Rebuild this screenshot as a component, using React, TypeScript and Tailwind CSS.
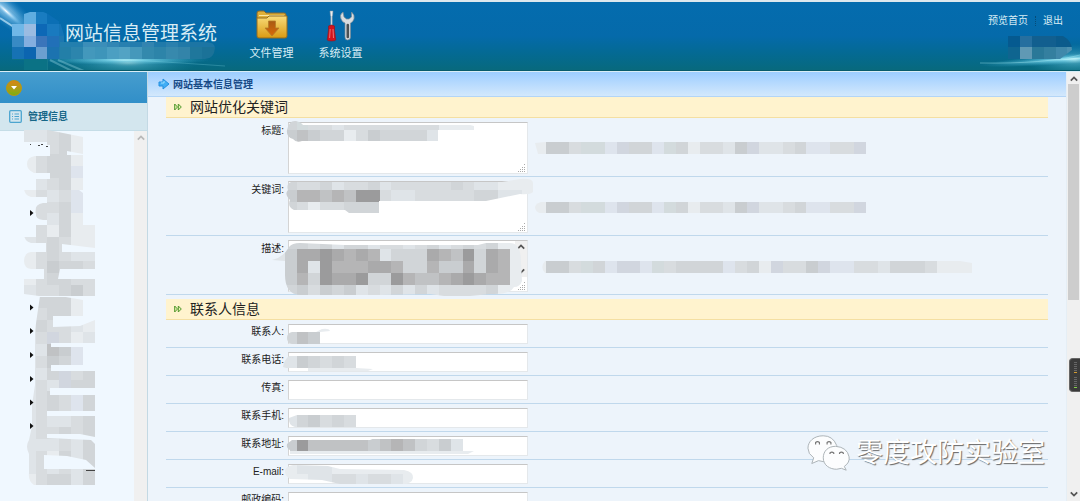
import type { ReactNode } from "react";

const CELL = 11.86;

const TONES: Record<string, string> = {
  a: "#e8ecef",
  b: "#dfe4e8",
  c: "#d8dcdf",
  d: "#d1d5d8",
  e: "#c9cdd0",
  f: "#c0c2c4",
  g: "#b5b5b6",
  h: "#aaaaab",
  i: "#9b9b9c",
  k: "#dee4ed",
  l: "#d1d6df",
  w: "#d3dbdd",
};

type MosaicData = { id: string; col: number; row: number; rows: (string | string[])[]; clip: string };

function Mosaic({ id, col, row, rows, clip }: MosaicData) {
  return (
    <g>
      <clipPath id={id}>
        <path d={clip} />
      </clipPath>
      <g clipPath={`url(#${id})`} shapeRendering="crispEdges">
        {rows.map((line, r) =>
          Array.from(line).map((tone, c) =>
            tone === "." ? null : (
              <rect
                key={`${r}-${c}`}
                x={(col + c) * CELL}
                y={(row + r) * CELL}
                width={CELL}
                height={CELL}
                fill={TONES[tone] ?? tone}
              />
            ),
          ),
        )}
      </g>
    </g>
  );
}

function Overlay({ x, y, children }: { x: number; y: number; children: ReactNode }) {
  return (
    <svg className="pointer-events-none absolute inset-0 h-full w-full overflow-visible" aria-hidden="true">
      <g transform={`translate(${-x} ${-y})`}>{children}</g>
    </svg>
  );
}

const HINT = "eecwwklddkwdaccbelbbcdkkccl";

const TEXT_ROWS: { id: string; label: string; masks: MosaicData[]; scroll?: boolean }[] = [
  {
    id: "title",
    label: "标题:",
    masks: [
      { id: "t1", col: 24, row: 10, rows: ["dwccbccccccccaaa", "efeddaceddddb..."], clip: "M287 130Q289 120 296 121Q301 122 303 125H470Q477 126 477 130H438V141H302Q296 143 293 139Q286 137 287 130Z" },
      { id: "t2", col: 45, row: 12, rows: ["a" + HINT], clip: "M535 143L545 142H866V154H538Z" },
    ],
  },
  {
    id: "keywords",
    label: "关键词:",
    masks: [
      { id: "k1", col: 24, row: 15, rows: ["dccdbccdbcccccdcbbaaa", "eggfgfiicbbcccccddbba", "dcaccddd"], clip: "M288 190Q286 184 291 182H502L520 179Q534 178 533 184V192Q530 195 520 194L486 201H379V213H349L345 210H294Q287 207 290 200Q284 194 288 190Z" },
      { id: "k2", col: 45, row: 17, rows: ["a" + HINT], clip: "M545 201.5H866V213.5H541Q535 212 535 207Q536 202 545 201.5Z" },
    ],
  },
  {
    id: "description",
    label: "描述:",
    scroll: true,
    masks: [
      { id: "d1", col: 22, row: 20, rows: ["..ddcdbddbccbcdbcdcdaa", "bbehhihghgbdddhgfidhga", "bbehbiggghhgddgeehdhga", "bbegdihhiddigffghihgga", "bbdecedebcbdbdbccccdaa"], clip: "M289 247Q292 243 300 243L345 245H478L486 243H510Q521 243 521 262L522 281Q520 287 514 287Q510 295 490 294L470 296H444L430 294L380 295L300 295Q285 294 285 275V261L272 260Q284 257 289 247Z" },
      { id: "d2", col: 45, row: 22, rows: ["aeecwdkllkwcddddkcdalccelkkccbdddcaaa"], clip: "M545 261H960L972 263V273H545Q541 269 543 264Z" },
    ],
  },
];

const INPUT_ROWS: { id: string; label: string; masks: MosaicData[] }[] = [
  { id: "contact", label: "联系人:", masks: [{ id: "i1", col: 24, row: 27, rows: ["aaaaaa", "dfeb"], clip: "M292 332H316L322 329Q329 328 330 331L320 332V344H292Q287 343 287 338Q287 333 292 332Z" }] },
  { id: "phone", label: "联系电话:", masks: [{ id: "i2", col: 23, row: 30, rows: ["bbedcdc", "...aaaaaa"], clip: "M289 356H356V368L373 369L368 371H296L283 367Q284 360 289 356Z" }] },
  { id: "fax", label: "传真:", masks: [] },
  { id: "mobile", label: "联系手机:", masks: [{ id: "i3", col: 24, row: 35, rows: ["bdecdc"], clip: "M297 415H356V427H295Q288 425 289 418Z" }] },
  { id: "address", label: "联系地址:", masks: [{ id: "i4", col: 24, row: 37, rows: ["eifffffefgfdceb", "aaaaaaaaaaaaaaaa"], clip: "M292 440L370 440L375 438H463V450L474 451L468 454H290V450Q286 448 287 444Z" }] },
  { id: "email", label: "E-mail:", masks: [{ id: "i5", col: 23, row: 39, rows: ["aabbbaaaaaaa", "aaabbccbccba"], clip: "M293 465L328 466L340 469L404 470Q414 472 413 478Q412 484 402 484H340L322 480L290 479Q284 475 285 470Q287 466 293 465Z" }] },
  { id: "postcode", label: "邮政编码:", masks: [] },
];

function Chevron({ down = false }: { down?: boolean }) {
  return (
    <svg viewBox="0 0 10 10" className={down ? "size-2 rotate-180" : "size-2"} aria-hidden="true">
      <path d="M1 7L5 3L9 7" fill="none" stroke="currentColor" strokeWidth="2.2" />
    </svg>
  );
}

function FolderIcon() {
  return (
    <svg viewBox="0 0 32 30" className="h-[30px] w-8" aria-hidden="true">
      <defs>
        <linearGradient id="folder" x2="0" y2="1">
          <stop stopColor="#f9dc7a" />
          <stop offset="1" stopColor="#d99a13" />
        </linearGradient>
        <linearGradient id="arrow" x2="0" y2="1">
          <stop stopColor="#a95a13" />
          <stop offset="1" stopColor="#d86a08" />
        </linearGradient>
      </defs>
      <path d="M1 3Q1 1 3 1H8L10 3H28Q30 3 30 5V9H1Z" fill="#dfaf37" stroke="#8a682c" />
      <path d="M3 5.500H28" stroke="#f8e6a3" />
      <path d="M1 8H11L13 6H31V26Q31 28 29 28H3Q1 28 1 26Z" fill="url(#folder)" stroke="#946d20" />
      <path d="M12.500 11H19.500V18H23L16 26L9 18H12.500Z" fill="url(#arrow)" stroke="#b47c2a" strokeWidth=".8" />
    </svg>
  );
}

function ToolsIcon() {
  return (
    <svg viewBox="0 0 30 32" className="h-8 w-[30px]" aria-hidden="true">
      <path d="M4 1H7L6.500 6H6.200V16H4.800V6H4.500Z" fill="#eee" stroke="#8597a4" strokeWidth=".5" />
      <path d="M2.500 16Q5.500 14 8.500 16L8.500 20L9.800 30Q9 31 5.500 31Q2 31 1.200 30L2.500 20Z" fill="#d3131d" stroke="#8c1720" strokeWidth=".6" />
      <path d="M4.200 19L3.600 28M7 19L7.500 28" stroke="#f28b87" strokeWidth=".8" />
      <path d="M17 2Q13 5 15 9Q16 12 19 13V27Q19 30 21.500 30Q24.500 30 24.500 27V13Q27 12 28 9Q29 5 25.500 2V7L23 9H20.500L18 7Z" fill="#d9dde0" stroke="#788a95" strokeWidth=".7" />
      <path d="M21.800 15V27" stroke="#4b5154" strokeWidth="2.600" strokeLinecap="round" />
    </svg>
  );
}

function Header() {
  return (
    <header className="relative flex h-[71px] shrink-0 items-start overflow-hidden border-t-2 border-b border-t-[#dce8ee] border-b-[#075b6b] bg-linear-to-b from-[#046cae] via-[#056aaa] to-[#08697d] text-[#d8edf5]">
      <svg className="pointer-events-none absolute top-0 left-0 h-[69px] w-[300px]" viewBox="0 2 300 69" aria-hidden="true">
        <defs>
          <radialGradient id="glow">
            <stop stopColor="#d8ffff" />
            <stop offset=".25" stopColor="#7fd9ee" stopOpacity=".75" />
            <stop offset="1" stopColor="#38a8c8" stopOpacity="0" />
          </radialGradient>
          <radialGradient id="flare">
            <stop stopColor="#ffffff" />
            <stop offset=".4" stopColor="#8fcdf2" stopOpacity=".75" />
            <stop offset="1" stopColor="#2a8fd0" stopOpacity="0" />
          </radialGradient>
        </defs>
        <ellipse cx="4" cy="9" rx="46" ry="14" fill="url(#flare)" opacity=".7" transform="rotate(40 4 9)" />
        <ellipse cx="6" cy="11" rx="26" ry="4" fill="url(#flare)" transform="rotate(42 6 11)" />
        <path d="M0 18L20 31" stroke="#c5e8fb" strokeWidth="2" opacity=".7" />
        <ellipse cx="125" cy="60" rx="85" ry="5" fill="url(#glow)" />
        <ellipse cx="128" cy="63" rx="70" ry="14" fill="url(#glow)" opacity=".45" />
        <path d="M50 60L72 71M58 60L84 71" stroke="#8fd1de" strokeWidth="2" opacity=".4" />
        <path d="M85 58Q140 60 225 66" stroke="#8fe3f0" fill="none" opacity=".25" />
      </svg>
      <svg className="pointer-events-none absolute top-0 right-0 h-[69px] w-[180px]" viewBox="900 2 180 69" aria-hidden="true">
        <ellipse cx="1070" cy="59" rx="90" ry="5" fill="url(#glow)" transform="rotate(-4 1070 59)" />
        <ellipse cx="1075" cy="60" rx="50" ry="16" fill="url(#glow)" opacity=".5" />
        <path d="M980 63Q1045 64 1080 55" stroke="#a9edf5" fill="none" opacity=".4" />
        <Mosaic
          id="user"
          col={85}
          row={3}
          rows={[["#055a90", "#266f9f", "#125f8f", "#125f8f", "#0b5b8c", "#0b5b8c"], ["#0f6590", "#6099b4", "#2a7898", "#347f9f", "#4088aa", "#4c90b0"]]}
          clip="M1008 36H1063Q1072 41 1072 50L1060 59H1008Z"
        />
      </svg>
      <h1 className="ml-[65px] w-[184px] pt-[18px] text-[19px] leading-7 font-normal whitespace-nowrap">网站信息管理系统</h1>
      <Overlay x={0} y={2}>
        <Mosaic
          id="logo"
          col={1}
          row={1}
          rows={[
            [".", "#5fade0", "#197cc0", "#0b6fb5", "."],
            ["#70b7e7", "#9bbce2", "#0d68b6", "#197abf", "#1474b6"],
            ["#388ac4", "#84aedf", "#3b75ba", "#2170b8", "#1d77b0"],
            ["#1672b4", "#0c65b0", "#6b9fd0", "#1c73b0", "#207caa"],
            ["#0b7285", "#0b7285", "#0b7285", "#16788b", "."],
          ]}
          clip="M12 24L24 14Q38 8 48 14L60 22L64 35V59H48V70L24 71V60H12Z"
        />
        <Mosaic
          id="subtitle"
          col={5}
          row={3}
          rows={[
            ["#237fae", "#237fae", "#3b8eb9", "#3b8eb9", "#3286b4", "#2880b0", "#237cae", "#3384b0", "#207aaa", "#2b80ad", "#2079a8", "#1c75a4", "#1c75a4", "#1c75a4"],
            ["#237fa8", "#2c85ad", "#4398bc", "#3e95ba", "#4b9fc2", "#52a3c4", "#4598bb", "#3389ad", "#2d84a9", "#3789ad", "#3384a9", "#1f779c", "#1b7298", "#1b7298"],
          ]}
          clip="M60 42H205Q215 42 215 48Q214 59 205 59H60Z"
        />
      </Overlay>
      <nav className="flex gap-6 pt-2 text-[11px] leading-4">
        <a href="#files" className="flex w-[45px] flex-col items-center whitespace-nowrap">
          <span className="flex h-[35px] items-start"><FolderIcon /></span>文件管理
        </a>
        <a href="#settings" className="flex w-[45px] flex-col items-center whitespace-nowrap">
          <span className="flex h-[35px] items-start"><ToolsIcon /></span>系统设置
        </a>
      </nav>
      <nav className="mr-[17px] ml-auto flex items-center pt-[11px] text-[10px] leading-4">
        <a href="#preview">预览首页</a>
        <span className="mx-[7px] h-2.5 border-l border-dotted border-[#054c78]" />
        <a href="#logout">退出</a>
      </nav>
    </header>
  );
}

function Sidebar() {
  return (
    <aside className="flex w-[148px] shrink-0 flex-col border-r border-[#c3d9e4] bg-[#f0f8ff]">
      <div className="flex h-[31px] shrink-0 items-center bg-linear-to-b from-[#469dce] to-[#318fc8] pl-[6px]">
        <button aria-label="折叠菜单" className="flex size-4 items-center justify-center rounded-full border border-[#bc970f] bg-linear-to-b from-[#d78316] to-[#78af12]">
          <svg viewBox="0 0 8 5" className="h-[5px] w-2" aria-hidden="true"><path d="M1 1H7L4 4.500Z" fill="#fff" /></svg>
        </button>
      </div>
      <h2 className="flex h-7 shrink-0 items-center gap-[6px] border-b border-[#c5dde7] bg-[#d3e6ee] pl-[9px] text-[10px] font-bold text-[#176788]">
        <svg viewBox="0 0 13 13" className="size-[13px]" fill="none" stroke="#4ca5cf" aria-hidden="true">
          <rect x=".7" y=".7" width="11.600" height="11.600" rx="1" strokeWidth="1.300" />
          <path d="M3 4H4M5.500 4H10M3 6.500H4M5.500 6.500H10M3 9H4M5.500 9H10" />
        </svg>
        管理信息
      </h2>
      <div className="flex min-h-0 flex-1">
        <nav aria-label="管理信息" className="relative min-w-0 flex-1">
          <Overlay x={0} y={131}>
            <Mosaic
              id="tree"
              col={2}
              row={11}
              rows={["bbcdaa", "..cdaa", "acddaa", "acddka", ".bcdaa", "acbcka", "accdka", ".cbdaa", ".cadaa", "bcdcaa", "acdcbb", "aceddc", "acddcc", "bccdec", "bbdddc", "acccbc", "bcccbb"]}
              clip="M24 129L48 130L83 137V154L67 151V155H83V190L79 190L83 193V225H95V248L62 244V252H95V269H60L58 279H95V296H39L24 294V279H44V269H31Q24 268 24 261Q24 253 31 252H46V243H31Q24 241 24 234Q24 226 31 225H47V220H43Q35 219 35 212Q35 204 43 203H47V197H31Q24 195 24 188Q24 180 31 179H50V173H34Q27 170 27 164Q27 157 35 156H50V145L24 143Z"
            />
            <Mosaic
              id="tree-lower"
              col={2}
              row={25}
              rows={["bdddaa", "bcddaa", "bdccba", "bclcab", "bbfeka", "bcedka", "bbdlcd", "bcbldd", "bcdckd", "bcdckd", "bcbbcd", "bccdcd", "bbbcbd", "bcadbd", "bcbcbd", "acddbd"]}
              clip="M40 296H60L83 300V316H53V327L80 326L95 320V343H51V347H83V365H51V371H95V388H50V395H95V411H47V416H95V437L80 434H47V438L91 440L95 444V468L86 460L67 456L44 455V469H95V485H34Q28 481 29 473V454Q25 446 29 440L32 426V405L35 385V330Z"
            />
            <g fill="#111">
              {[213, 307.5, 331, 355, 379, 402.5, 426].map((y) => <path key={y} d={`M30 ${y - 3}L33.500 ${y}L30 ${y + 3}Z`} />)}
            </g>
            <path d="M30 144H31V145H30ZM38 145H40V146H38ZM41 144H43V145H41ZM46 146H48V147H46ZM86 470H95V471H86Z" fill="#444" />
          </Overlay>
        </nav>
        <div className="flex w-[13px] justify-center bg-[#f0f0f0] pt-[3px] text-[#b8b8b8]"><Chevron /></div>
      </div>
    </aside>
  );
}

function SectionTitle({ children }: { children: string }) {
  return (
    <h3 className="flex h-[21px] items-center gap-2 border-b border-[#f4dfa2] bg-[#fff3ce] pl-2 text-[14px] leading-5 font-normal text-[#222]">
      <svg viewBox="0 0 8 8" className="size-2" fill="#e8f4b0" stroke="#4f962b" strokeWidth="1" aria-hidden="true">
        <path d="M.7 1L3.500 4L.7 7ZM4.300 1L7.300 4L4.300 7Z" />
      </svg>
      {children}
    </h3>
  );
}

function Watermark() {
  return (
    <div className="pointer-events-none absolute right-[35px] bottom-[28px] flex items-center gap-[5px] text-[27px] leading-10 text-white [text-shadow:1px_1px_1px_#666]">
      <svg viewBox="0 0 46 38" className="h-[38px] w-11" fill="#fcfdfe" stroke="#a9b0b4" strokeWidth="1" aria-hidden="true">
        <path d="M17 1C7 1 1 7 1 14Q1 20 7 24L5 30L12 27Q17 29 22 27C31 24 34 18 31 11Q27 1 17 1Z" />
        <path d="M30 12C22 12 17 17 17 24C17 32 24 36 31 36L36 35L41 37L39 33Q45 29 44 23Q42 13 30 12Z" />
        <path d="M9 10V8Q11 6 13 8V10M21 10V8Q23 6 25 8V10M24 20V19Q26 17 28 19V20M34 20V19Q36 17 38 19V20" fill="none" stroke="#777" strokeWidth="1.200" />
      </svg>
      零度攻防实验室
    </div>
  );
}

export default function App() {
  return (
    <div className="relative flex h-screen flex-col overflow-hidden bg-[#edf4fb] font-['Liberation_Sans','Noto_Sans_CJK_SC',sans-serif] text-[10px] text-[#222]">
      <Header />
      <div className="flex min-h-0 flex-1 border-t border-[#d9edf6]">
        <Sidebar />
        <main className="flex min-w-0 flex-1 flex-col">
          <h2 className="flex h-[25px] shrink-0 items-center gap-[3px] border-b border-[#b3d5f7] bg-linear-to-b from-[#9ccdff] to-[#d3e8fc] pl-[10px] text-[10px] font-bold text-[#174a86]">
            <svg viewBox="0 0 12 12" className="size-3" aria-hidden="true">
              <path d="M1 4H5V1L11 6L5 11V8H1Z" fill="#42aef5" stroke="#238fe0" strokeLinejoin="round" />
              <path d="M3 5H6V3" stroke="#9ce0ff" fill="none" />
            </svg>
            网站基本信息管理
          </h2>
          <form className="min-h-0 flex-1 overflow-hidden px-[18px]">
            <SectionTitle>网站优化关键词</SectionTitle>
            {TEXT_ROWS.map((row, index) => (
              <div key={row.id} className="relative flex h-[59px] items-start gap-1 border-b border-[#c0d8ec] pt-1">
                <label htmlFor={row.id} className="w-[118px] pt-px text-right leading-4">{row.label}</label>
                <div className="relative h-[52px] w-60">
                  <textarea id={row.id} className="block h-full w-full resize-none border border-[#e4e8eb] border-t-[#c6c6c6] border-l-[#d4d4d4] bg-white" />
                  {row.scroll && (
                    <span className="absolute top-px right-px flex h-9 w-3 flex-col items-center justify-between bg-[#f0f0f0] py-0.5 text-[#555]">
                      <Chevron /><Chevron down />
                    </span>
                  )}
                  <svg viewBox="0 0 8 8" className="absolute right-0.5 bottom-0.5 size-2" fill="#aaa" aria-hidden="true">
                    <path d="M6 0h1v1h-1zM4 3h1v1h-1zM6 3h1v1h-1zM2 5h1v1h-1zM4 5h1v1h-1zM6 5h1v1h-1zM0 7h1v1h-1zM2 7h1v1h-1zM4 7h1v1h-1zM6 7h1v1h-1z" />
                  </svg>
                </div>
                <Overlay x={166} y={118 + index * 59}>
                  {row.masks.map((mask) => <Mosaic key={mask.id} {...mask} />)}
                </Overlay>
              </div>
            ))}
            <div className="pt-1">
              <SectionTitle>联系人信息</SectionTitle>
            </div>
            {INPUT_ROWS.map((row, index) => (
              <div key={row.id} className="relative flex h-7 items-start gap-1 border-b border-[#c0d8ec] pt-1">
                <label htmlFor={row.id} className="w-[118px] text-right leading-4">{row.label}</label>
                <input id={row.id} type="text" className="h-5 w-60 border border-[#e4e8eb] border-t-[#c6c6c6] border-l-[#d4d4d4] bg-white" />
                <Overlay x={166} y={320 + index * 28}>
                  {row.masks.map((mask) => <Mosaic key={mask.id} {...mask} />)}
                </Overlay>
              </div>
            ))}
          </form>
        </main>
        <div className="flex w-[14px] shrink-0 flex-col items-center border-l border-[#e5eef5] bg-[#f0f0f0] py-[3px] text-[#555]">
          <Chevron />
          <div className="mt-px mb-auto h-[51%] w-[11px] bg-[#cdcdcd]" />
          <Chevron down />
        </div>
      </div>
      <div className="absolute top-[358px] right-0 flex h-[34px] w-[11px] flex-col items-center justify-center gap-1 rounded-l-sm border border-r-0 border-[#666] bg-[#3b3b3b]">
        <span className="h-[11px] w-[3px] border-b border-[#d29b31] bg-[repeating-linear-gradient(#666_0_1px,#3b3b3b_1px_2px)]" />
        <span className="h-[11px] w-[3px] border-b border-[#83ce4a] bg-[repeating-linear-gradient(#666_0_1px,#3b3b3b_1px_2px)]" />
      </div>
      <Watermark />
    </div>
  );
}
